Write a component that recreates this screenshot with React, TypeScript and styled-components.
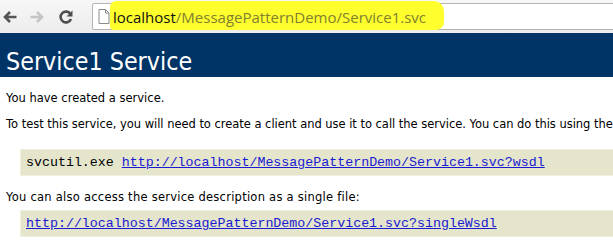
import React from 'react'
import styled, {createGlobalStyle} from 'styled-components'

const GlobalStyle = createGlobalStyle`
  html, body {
    margin: 0;
    padding: 0;
    background: #ffffff;
    overflow: hidden;
  }
`

const Page = styled.div`
  width: 613px;
  height: 244px;
  overflow: hidden;
  display: flex;
  flex-direction: column;
`

const Toolbar = styled.div`
  height: 33px;
  flex: 0 0 33px;
  display: flex;
  align-items: center;
  background: linear-gradient(#f7f7f7, #ececec);
  box-sizing: border-box;
  padding-left: 2px;
`

const NavButton = styled.div<{ $width: number }>`
  width: ${p => p.$width}px;
  height: 33px;
  display: flex;
  align-items: center;
`

const AddressBox = styled.div`
  position: relative;
  flex: 1;
  margin-left: 10px;
  margin-right: -4px;
  height: 25px;
  background: #ffffff;
  border: 1px solid #b4b4b4;
  border-radius: 2px;
  display: flex;
  align-items: center;
  padding-left: 5px;
`

const Highlight = styled.div`
  position: absolute;
  left: 17px;
  top: -3px;
  width: 334px;
  height: 29px;
  background: #ffff2e;
  border-radius: 6px 10px 8px 4px;
`

const Url = styled.span`
  position: relative;
  margin-left: 3px;
  font-family: "Open Sans", "Noto Sans", sans-serif;
  font-size: 15px;
  color: #80802e;
`

const Host = styled.span`
  color: #111111;
`

const Heading = styled.div`
  flex: 0 0 44px;
  box-sizing: border-box;
  background: #003366;
  color: #ffffff;
  font-family: "DejaVu Sans Condensed", "DejaVu Sans", sans-serif;
  font-size: 24.8px;
  line-height: 31px;
  padding: 13px 0 0 6px;
  white-space: nowrap;
`

const Content = styled.div`
  display: flex;
  flex-direction: column;
  padding: 14px 0 0 6px;
  font-family: "DejaVu Sans", Verdana, sans-serif;
  font-size: 11.5px;
  color: #000000;
  width: 900px;
`

const Para = styled.p<{ $bottom: number; $spacing?: number }>`
  margin: 0 0 ${p => p.$bottom}px;
  line-height: 14px;
  letter-spacing: ${p => p.$spacing ?? 0}px;
  white-space: nowrap;
`

const Pre = styled.pre<{ $bottom: number }>`
  margin: 0 0 ${p => p.$bottom}px 14px;
  padding: 5px;
  background: #e5e5cc;
  border: 1px solid #f0f0e0;
  font-family: "Liberation Mono", "Courier New", monospace;
  font-size: 13.3px;
  line-height: 15px;
  white-space: nowrap;
`

const Link = styled.a`
  color: #1a1ad0;
  text-decoration: underline;
`

const BackIcon = ({color}: { color: string }) => (
    <svg width="16" height="14" viewBox="0 0 16 14">
        <path d="M14.5 7H3.5M8 2L3 7l5 5" fill="none" stroke={color} strokeWidth="2.6"/>
    </svg>
)

const ForwardIcon = ({color}: { color: string }) => (
    <svg width="16" height="14" viewBox="0 0 16 14">
        <path d="M1.5 7h11M8 2l5 5-5 5" fill="none" stroke={color} strokeWidth="2.6"/>
    </svg>
)

const ReloadIcon = () => (
    <svg width="16" height="16" viewBox="0 0 16 16">
        <path d="M12.6 5.2A5.4 5.4 0 1 0 13 10" fill="none" stroke="#4f4f4f" strokeWidth="2.6"/>
        <path d="M14.5 1.5v6h-6z" fill="#4f4f4f"/>
    </svg>
)

const PageIcon = () => (
    <svg width="12" height="15" viewBox="0 0 12 15">
        <path d="M1 0.5h6.5l3.5 3.5v10.5H1z" fill="#ffffff" stroke="#8a8a8a"/>
        <path d="M7.5 0.5v3.5H11" fill="none" stroke="#8a8a8a"/>
    </svg>
)

const App: React.FC = () => {
    return <>
        <GlobalStyle/>
        <Page>
            <Toolbar>
                <NavButton $width={27}><BackIcon color="#555555"/></NavButton>
                <NavButton $width={29}><ForwardIcon color="#c4c4c4"/></NavButton>
                <NavButton $width={24}><ReloadIcon/></NavButton>
                <AddressBox>
                    <PageIcon/>
                    <Highlight/>
                    <Url><Host>localhost</Host>/MessagePatternDemo/Service1.svc</Url>
                </AddressBox>
            </Toolbar>
            <Heading>Service1 Service</Heading>
            <Content>
                <Para $bottom={12}>You have created a service.</Para>
                <Para $bottom={18} $spacing={-0.03}>
                    To test this service, you will need to create a client and use it to call the service. You
                    can do this using the
                </Para>
                <Pre $bottom={14}>
                    svcutil.exe <Link href="#">http://localhost/MessagePatternDemo/Service1.svc?wsdl</Link>
                </Pre>
                <Para $bottom={6} $spacing={0.25}>You can also access the service description as a single file:</Para>
                <Pre $bottom={0}>
                    <Link href="#">http://localhost/MessagePatternDemo/Service1.svc?singleWsdl</Link>
                </Pre>
            </Content>
        </Page>
    </>
}

export default App
